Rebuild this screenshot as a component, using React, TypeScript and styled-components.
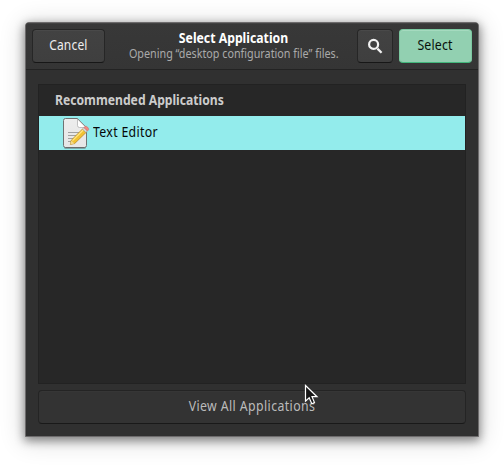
import React from 'react';
import styled, { createGlobalStyle } from 'styled-components';

const GlobalStyle = createGlobalStyle`
  * { box-sizing: border-box; }
  body { margin: 0; background: #fff; font-family: "Noto Sans", "Open Sans", sans-serif; overflow: hidden; }
  button { font: inherit; padding: 0; margin: 0; }
`;

const Page = styled.main`
  width: 504px;
  height: 465px;
  padding: 22px 25px 28px;
  position: relative;
  overflow: hidden;
`;

const Dialog = styled.section`
  width: 454px;
  height: 415px;
  display: flex;
  flex-direction: column;
  background: #303030;
  border: 1px solid #6d6b6c;
  border-radius: 4px 4px 0 0;
  box-shadow: 0 3px 10px 1px rgba(0, 0, 0, 0.42), 0 3px 24px 2px rgba(0, 0, 0, 0.16);
`;

const HeaderBar = styled.header`
  height: 47px;
  flex: none;
  display: flex;
  align-items: flex-start;
  padding: 6px 6px 0;
  background: linear-gradient(#383838, #353535);
  border-bottom: 1px solid #232323;
  border-radius: 3px 3px 0 0;
  box-shadow: inset 0 1px #424242;
`;

const Titles = styled.div`
  flex: 1;
  display: flex;
  flex-direction: column;
  align-items: center;
  padding-left: 5px;
`;

const Text = styled.span<{ $size: number; $scale: number; $color: string; $bold?: boolean; $line?: number; $left?: boolean; $track?: number }>`
  display: block;
  white-space: nowrap;
  font-size: ${p => p.$size}px;
  line-height: ${p => p.$line ?? 20}px;
  font-weight: ${p => (p.$bold ? 700 : 400)};
  letter-spacing: ${p => p.$track ?? 0}px;
  color: ${p => p.$color};
  transform: scaleX(${p => p.$scale});
  transform-origin: ${p => (p.$left ? 'left' : 'center')};
`;

const Button = styled.button<{ $width: number; $suggested?: boolean }>`
  width: ${p => p.$width}px;
  height: 34px;
  flex: none;
  display: flex;
  align-items: center;
  justify-content: center;
  padding-bottom: 2px;
  background: ${p => (p.$suggested ? '#92d0b1' : 'linear-gradient(#424242, #3f3f3f)')};
  border: 1px solid ${p => (p.$suggested ? '#7bc8a0' : '#262626')};
  border-bottom-color: ${p => (p.$suggested ? '#43b87c' : '#171717')};
  border-radius: 4px;
  box-shadow: inset 0 1px ${p => (p.$suggested ? '#a5dabf' : '#494949')};
`;

const SearchButton = styled(Button)`
  margin-right: 6px;
  padding-bottom: 0;
`;

const Content = styled.div`
  flex: 1;
  display: flex;
  flex-direction: column;
  gap: 6px;
  padding: 14px 12px 12px;
`;

const AppList = styled.div`
  height: 300px;
  background: #272727;
  border: 1px solid #222;
`;

const ListHeading = styled.div`
  height: 31px;
  padding: 5px 0 0 16px;
`;

const AppRow = styled.div`
  height: 34px;
  display: flex;
  align-items: flex-start;
  padding-left: 22px;
  background: #93ecec;
`;

const AppName = styled(Text)`
  padding-top: 6px;
`;

const ViewAllButton = styled(Button)`
  background: #333;
  border-color: #242424;
  border-bottom-color: #191919;
  box-shadow: inset 0 1px #363636;
`;

const Pointer = styled.svg`
  position: absolute;
  left: 304px;
  top: 384px;
`;

const SearchIcon = () => (
  <svg width="16" height="16" viewBox="0 0 16 16" fill="none" stroke="#f2f2f2">
    <circle cx="6.6" cy="6.4" r="4.5" strokeWidth="2.2" />
    <path d="M10.400 10.600 14.600 14.700" strokeWidth="2.3" />
  </svg>
);

const EditorIcon = () => (
  <svg width="32" height="34" viewBox="0 0 32 34">
    <defs>
      <linearGradient id="paper" x2="0" y2="1"><stop stopColor="#ededed" /><stop offset="1" stopColor="#e6e6e6" /></linearGradient>
    </defs>
    <path d="M4.500 2.500H16.500L25.500 11.500V29.500Q25.500 31.500 23.500 31.500H4.500Q2.500 31.500 2.500 29.500V4.500Q2.500 2.500 4.500 2.500Z" fill="url(#paper)" stroke="#6f7373" />
    <path d="M3.500 32H24.500" stroke="#666" strokeWidth="1" />
    <path d="M16.500 3V9.500Q16.500 11.500 18.500 11.500H25Z" fill="#fff" stroke="#aaa" strokeWidth=".7" />
    <path d="M7 16.500H19M7 19.500H17M7 22.500H14M7 25.500H12" stroke="#a2a2a2" strokeWidth="1.200" />
    <path d="M9.300 28.500 10.300 24.200 21.500 13 25 16.500 13.700 27.500Z" fill="#f1c232" stroke="#b98b29" strokeWidth=".8" />
    <path d="M11.500 24.600 22.200 14" stroke="#ffe784" strokeWidth="1.300" />
    <path d="M21.500 13 23 11.500 26.400 14.900 25 16.500Z" fill="#ddd" stroke="#999" strokeWidth=".5" />
    <path d="M22.900 11.600 24.300 10.200Q25.400 10 26.700 11.300Q28 12.700 27.600 13.800L26.500 14.900Z" fill="#f48780" stroke="#c5736d" strokeWidth=".6" />
    <path d="M9.300 28.500 10.300 24.500 13.400 27.500Z" fill="#f2d98d" />
  </svg>
);

export default function App() {
  return (
    <Page>
      <GlobalStyle />
      <Dialog>
        <HeaderBar>
          <Button $width={73}><Text $size={14} $scale={0.86} $track={0.2} $color="#eee">Cancel</Text></Button>
          <Titles>
            <Text $size={14} $scale={0.875} $color="#fff" $bold $line={17}>Select Application</Text>
            <Text $size={12} $scale={0.898} $color="#aaa" $line={15}>Opening “desktop configuration file” files.</Text>
          </Titles>
          <SearchButton $width={36} aria-label="Search"><SearchIcon /></SearchButton>
          <Button $width={73} $suggested><Text $size={14} $scale={0.88} $track={0.2} $color="#07100b">Select</Text></Button>
        </HeaderBar>
        <Content>
          <AppList>
            <ListHeading><Text $size={14} $scale={0.868} $color="#ccc" $bold $left>Recommended Applications</Text></ListHeading>
            <AppRow><EditorIcon /><AppName $size={14} $scale={0.88} $track={0.36} $color="#050808" $left>Text Editor</AppName></AppRow>
          </AppList>
          <ViewAllButton $width={428}><Text $size={14} $scale={0.88} $track={0.45} $color="#bbb">View All Applications</Text></ViewAllButton>
        </Content>
      </Dialog>
      <Pointer width="15" height="22" viewBox="0 0 15 22">
        <path d="M1.500 1.500V17.200L5.200 13.800 7.800 19.800 10.500 18.600 8 12.700H13Z" fill="#171717" stroke="#fff" strokeWidth="1.200" />
      </Pointer>
    </Page>
  );
}
